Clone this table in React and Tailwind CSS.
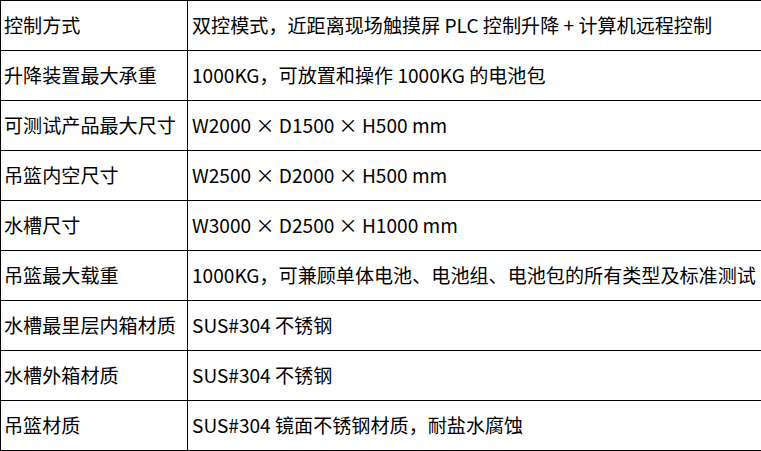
import React from "react";

const rows = [
  ["控制方式", "双控模式，近距离现场触摸屏 PLC 控制升降 + 计算机远程控制"],
  ["升降装置最大承重", "1000KG，可放置和操作 1000KG 的电池包"],
  ["可测试产品最大尺寸", "W2000 × D1500 × H500 mm"],
  ["吊篮内空尺寸", "W2500 × D2000 × H500 mm"],
  ["水槽尺寸", "W3000 × D2500 × H1000 mm"],
  ["吊篮最大载重", "1000KG，可兼顾单体电池、电池组、电池包的所有类型及标准测试"],
  ["水槽最里层内箱材质", "SUS#304 不锈钢"],
  ["水槽外箱材质", "SUS#304 不锈钢"],
  ["吊篮材质", "SUS#304 镜面不锈钢材质，耐盐水腐蚀"],
];

const App = () => {
  return (
    <div className="w-[761px] h-[451px] bg-white text-black font-['Noto_Sans_CJK_SC',sans-serif] text-[19.1px] leading-none">
      <div className="border-l border-t border-black">
        {rows.map(([label, value], i) => (
          <div key={i} className="grid grid-cols-[187px_574px] h-[50px]">
            <div className="flex items-center border-r border-b border-black pl-[3px] whitespace-nowrap">
              {label}
            </div>
            <div className="flex items-center border-r border-b border-black pl-[4px] whitespace-nowrap">
              {value}
            </div>
          </div>
        ))}
      </div>
    </div>
  );
};

export default App;
